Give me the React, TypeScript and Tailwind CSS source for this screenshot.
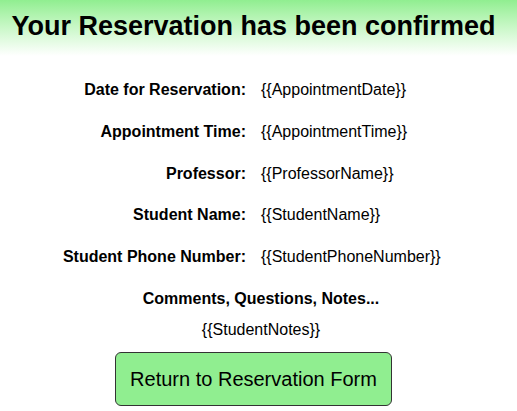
export default function App() {
  const rows = [
    ["Date for Reservation:", "{{AppointmentDate}}"],
    ["Appointment Time:", "{{AppointmentTime}}"],
    ["Professor:", "{{ProfessorName}}"],
    ["Student Name:", "{{StudentName}}"],
    ["Student Phone Number:", "{{StudentPhoneNumber}}"],
  ];

  return (
    <div className="min-h-screen bg-white text-black font-['Liberation_Sans',Arial,sans-serif]">
      {/* Header */}
      <div className="bg-gradient-to-b from-[#90ee90] to-white pt-[10px] pb-[14px] pr-[10px] text-center">
        <h1 className="text-[27px] font-bold leading-[32px]">Your Reservation has been confirmed</h1>
      </div>

      {/* Details */}
      <div className="grid grid-cols-[246px_1fr] gap-y-[23px] pt-[25px] text-[16px] leading-[18.75px]">
        {rows.map(([label, value]) => (
          <div key={label} className="contents">
            <div className="text-right font-bold">{label}</div>
            <div className="pl-[15px]">{value}</div>
          </div>
        ))}
      </div>

      {/* Notes */}
      <div className="pl-[5px] text-center text-[16px] leading-[18.75px]">
        <div className="mt-[23px] font-bold">Comments, Questions, Notes...</div>
        <div className="mt-[12.5px]">{"{{StudentNotes}}"}</div>
      </div>

      <div className="flex justify-center pr-[10px] mt-[12px]">
        <button className="w-[277px] h-[54px] bg-[#90ee90] border border-[#333] rounded-[6px] text-[20px]">
          Return to Reservation Form
        </button>
      </div>
    </div>
  );
}
